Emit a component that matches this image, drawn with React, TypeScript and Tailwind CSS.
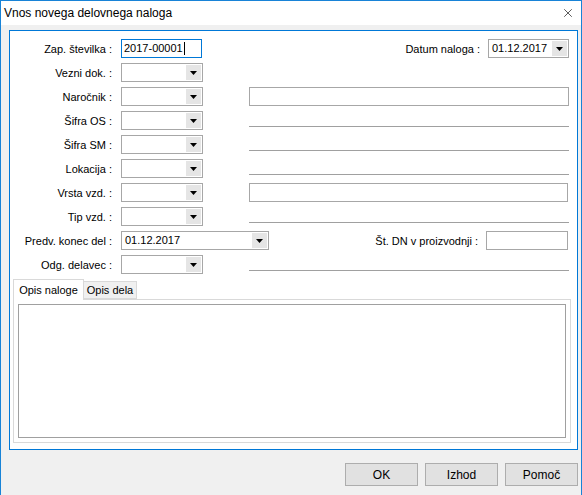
import { X } from "lucide-react";

const Arrow = () => (
  <div className="flex h-full w-[15px] items-center justify-center bg-[#e5e5e5]">
    <svg width="7" height="4" viewBox="0 0 7 4">
      <path d="M0 0h7L3.5 4z" fill="#000" />
    </svg>
  </div>
);

const Combo = ({ value = "", w = "w-[82px]" }: { value?: string; w?: string }) => (
  <div className={`flex h-[19px] ${w} items-stretch border border-[#a7a7a7] bg-white p-px`}>
    <span className="flex-1 pl-[2px] leading-[15px]">{value}</span>
    <Arrow />
  </div>
);

const Line = () => <div className="ml-[46px] h-[16px] w-[320px] self-start border-b border-[#a0a0a0]" />;

const Box = ({ w = "w-[320px]" }: { w?: string }) => (
  <div className={`ml-[46px] h-[19px] ${w} border border-[#a7a7a7] bg-white`} />
);

const Label = ({ children }: { children: React.ReactNode }) => (
  <span className="mt-[2px] w-[104px] shrink-0 pr-[2px] text-right">{children}</span>
);

const Row = ({ children }: { children: React.ReactNode }) => (
  <div className="flex h-[24px] items-start">{children}</div>
);

export default function App() {
  return (
    <div
      className="flex h-[495px] w-[582px] flex-col border-x border-t border-[#1883d7] bg-[#f0f0f0] text-[11px] text-black"
      style={{ fontFamily: '"Liberation Sans", Arial, sans-serif' }}
    >
      {/* TITLE BAR */}
      <div className="flex h-[24px] items-center justify-between bg-white pl-[3px] pr-[6px]">
        <span className="text-[12px]">Vnos novega delovnega naloga</span>
        <X size={14} strokeWidth={1.1} className="text-black" />
      </div>

      {/* FORM PANEL */}
      <div className="ml-[8px] mr-[3px] mt-[5px] flex h-[420px] flex-col border border-[#0078d7] bg-white pt-[8px]">
        <Row>
          <Label>Zap. številka :</Label>
          <div className="ml-[7px] flex h-[19px] w-[81px] items-center border border-[#0078d7] pl-[2px]">
            2017-00001<span className="ml-px h-[13px] w-px bg-black" />
          </div>
          <span className="ml-auto mr-[8px] mt-[2px]">Datum naloga :</span>
          <div className="mr-[8px]">
            <Combo value="01.12.2017" w="w-[81px]" />
          </div>
        </Row>
        <Row>
          <Label>Vezni dok. :</Label>
          <div className="ml-[7px]"><Combo /></div>
        </Row>
        <Row>
          <Label>Naročnik :</Label>
          <div className="ml-[7px]"><Combo /></div>
          <Box />
        </Row>
        <Row>
          <Label>Šifra OS :</Label>
          <div className="ml-[7px]"><Combo /></div>
          <Line />
        </Row>
        <Row>
          <Label>Šifra SM :</Label>
          <div className="ml-[7px]"><Combo /></div>
          <Line />
        </Row>
        <Row>
          <Label>Lokacija :</Label>
          <div className="ml-[7px]"><Combo /></div>
          <Line />
        </Row>
        <Row>
          <Label>Vrsta vzd. :</Label>
          <div className="ml-[7px]"><Combo /></div>
          <Box w="w-[319px]" />
        </Row>
        <Row>
          <Label>Tip vzd. :</Label>
          <div className="ml-[7px]"><Combo /></div>
          <Line />
        </Row>
        <Row>
          <Label>Predv. konec del :</Label>
          <div className="ml-[7px]"><Combo value="01.12.2017" w="w-[148px]" /></div>
          <span className="ml-auto mr-[8px] mt-[2px]">Št. DN v proizvodnji :</span>
          <div className="mr-[9px] h-[19px] w-[82px] border border-[#a7a7a7]" />
        </Row>
        <Row>
          <Label>Odg. delavec :</Label>
          <div className="ml-[7px]"><Combo /></div>
          <Line />
        </Row>

        {/* TABS */}
        <div className="ml-[3px] mr-[6px] flex flex-1 flex-col pb-[6px]">
          <div className="flex items-end">
            <div className="relative z-10 -mb-px flex h-[21px] w-[71px] items-center justify-center border border-b-0 border-[#d9d9d9] bg-white">
              Opis naloge
            </div>
            <div className="flex h-[18px] w-[53px] items-center justify-center border border-l-0 border-[#d9d9d9] bg-[#f0f0f0]">
              Opis dela
            </div>
          </div>
          <div className="flex flex-1 border border-[#d9d9d9] bg-white p-[4px]">
            <div className="flex-1 border border-[#a0a0a0]" />
          </div>
        </div>
      </div>

      {/* BUTTONS */}
      <div className="mr-[3px] mt-[13px] flex justify-end gap-[7px]">
        {["OK", "Izhod", "Pomoč"].map((t) => (
          <button
            key={t}
            className="h-[23px] w-[73px] border border-[#adadad] bg-[#e1e1e1] text-[12px]"
          >
            {t}
          </button>
        ))}
      </div>
    </div>
  );
}
